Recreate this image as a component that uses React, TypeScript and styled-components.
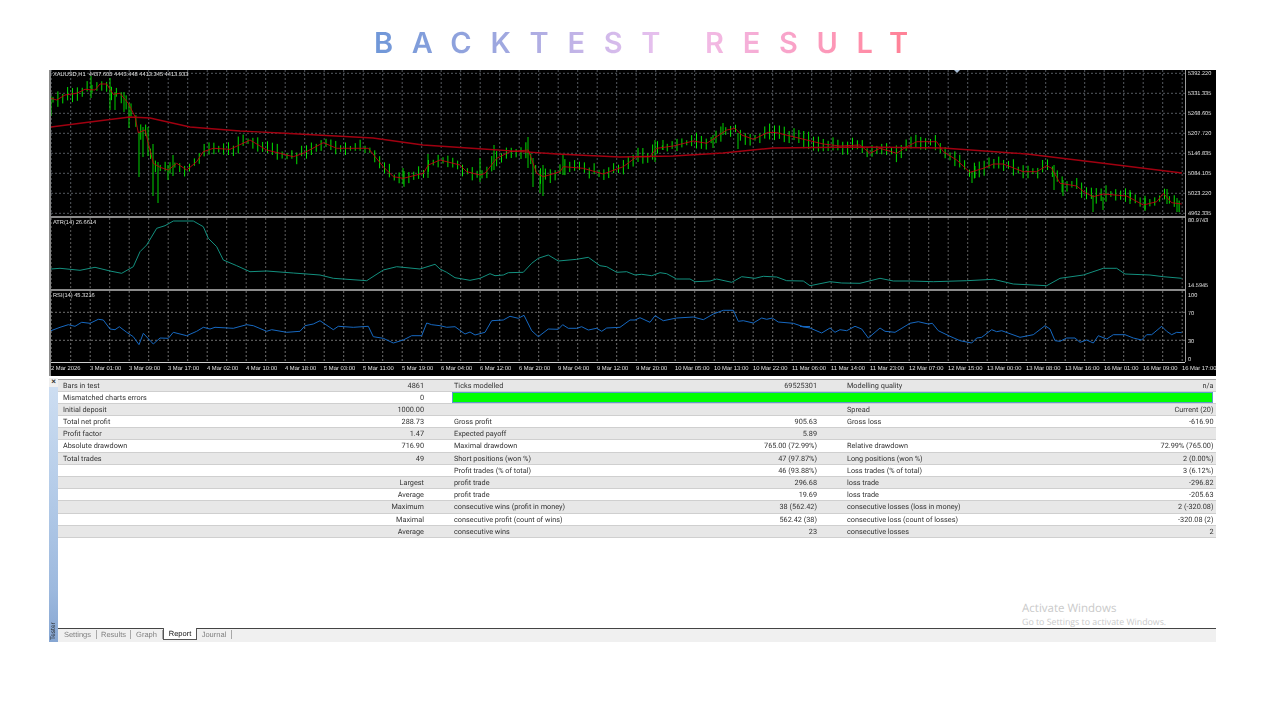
import React from 'react';
import styled, { createGlobalStyle } from 'styled-components';

const GlobalStyle = createGlobalStyle`
    html, body {
        margin: 0;
        padding: 0;
        background: #fff;
        width: 1280px;
        height: 720px;
        overflow: hidden;
        text-rendering: geometricPrecision;
    }
`;

type Pt = [number, number];

// points were read off zoomed crops (3x), so convert them back to page pixels
const crop = (ox: number, oy: number, flat: number[]): Pt[] => {
    const out: Pt[] = [];
    for (let i = 0; i < flat.length; i += 2) {
        out.push([ox + flat[i] / 3, oy + flat[i + 1] / 3]);
    }
    return out;
};

const fastMa: Pt[] = [
    ...crop(40, 60, [33, 115, 50, 120, 75, 105, 110, 100, 135, 88, 165, 90, 180, 72, 200, 72, 220, 103, 240, 100, 265, 130, 285, 170, 295, 218, 315, 210, 340, 310, 360, 322, 385, 330, 410, 310, 440, 330, 470, 305, 490, 275, 520, 265, 570, 268, 630, 240, 680, 270, 760, 290, 790, 280, 850, 248, 890, 265, 985, 265, 1030, 320, 1060, 350, 1090, 355, 1150, 340, 1165, 315, 1200, 300]),
    ...crop(440, 60, [60, 315, 80, 335, 120, 345, 135, 340, 170, 295, 210, 275, 265, 270, 290, 340, 310, 350, 360, 335, 370, 320, 430, 325, 490, 342, 550, 320, 590, 290, 630, 290, 650, 265, 700, 258, 760, 243, 800, 250, 860, 210, 885, 205, 905, 225, 940, 238, 985, 217, 1010, 218, 1100, 240, 1150, 252, 1200, 258]),
    ...crop(860, 60, [0, 255, 30, 280, 60, 265, 110, 280, 140, 260, 170, 245, 230, 245, 250, 275, 290, 300, 330, 337, 370, 325, 400, 312, 430, 312, 490, 335, 530, 335, 560, 317, 575, 325, 600, 370, 650, 378, 675, 398, 700, 410, 730, 402, 800, 408, 850, 435, 890, 425, 910, 400, 935, 428, 965, 432]),
];

const slowMa: Pt[] = [
    [51, 127], [90, 122], [130, 117], [150, 118], [190, 127], [240, 131], [280, 133], [373, 138], [423, 145], [483, 149],
    [557, 154], [620, 157], [673, 156], [723, 153], [773, 148], [860, 147], [943, 148], [1027, 154], [1093, 162], [1182, 173],
];

const atr: Pt[] = [
    ...crop(40, 215, [33, 162, 60, 160, 120, 166, 165, 157, 210, 168, 245, 175, 280, 155, 300, 110, 320, 90, 350, 40, 375, 32, 400, 18, 460, 18, 490, 35, 505, 70, 530, 95, 550, 135, 590, 152, 630, 170, 680, 168, 760, 174, 840, 180, 880, 190, 980, 197, 1030, 165, 1070, 155, 1140, 162, 1185, 148]),
    ...crop(440, 215, [0, 162, 20, 172, 45, 188, 90, 196, 120, 190, 150, 176, 165, 182, 190, 180, 205, 173, 250, 172, 275, 145, 295, 130, 325, 120, 355, 138, 410, 133, 445, 127, 480, 152, 500, 155, 530, 172, 560, 170, 585, 180, 605, 178, 635, 182, 660, 173, 680, 176, 710, 192, 750, 192, 765, 200, 810, 198, 830, 192, 875, 202, 905, 185, 945, 190, 970, 184, 1010, 186, 1040, 197, 1090, 198]),
    ...crop(800, 215, [30, 212, 90, 200, 125, 204, 180, 205, 240, 190, 280, 198, 330, 198, 400, 200, 500, 197, 580, 193, 640, 207, 740, 212, 780, 190, 850, 180, 910, 160, 950, 160, 975, 177, 1050, 180, 1090, 185, 1145, 190]),
];

const rsi: Pt[] = [
    ...crop(40, 215, [33, 350, 60, 340, 85, 332, 105, 337, 125, 325, 150, 328, 175, 316, 190, 318, 210, 345, 225, 347, 238, 338, 260, 355, 280, 368, 297, 392, 310, 358, 340, 390, 360, 372, 385, 373, 400, 355, 440, 365, 470, 352, 490, 340, 510, 345, 525, 340, 580, 343, 620, 332, 640, 335, 680, 352, 695, 347, 740, 355, 780, 352, 795, 335, 820, 330, 840, 320, 880, 347, 895, 337, 940, 340, 985, 337, 1000, 368, 1030, 373, 1060, 387, 1090, 378, 1115, 365, 1145, 365, 1160, 327, 1175, 332]),
    ...crop(440, 215, [0, 335, 20, 340, 45, 338, 75, 360, 90, 354, 105, 363, 135, 355, 155, 320, 190, 318, 210, 307, 235, 313, 252, 304, 275, 350, 295, 368, 325, 345, 355, 346, 368, 332, 385, 343, 410, 343, 425, 338, 445, 348, 470, 343, 485, 352, 500, 342, 540, 340, 570, 318, 585, 318, 600, 311, 630, 325, 645, 305, 670, 320, 710, 312, 760, 309, 790, 317, 820, 300, 850, 289, 880, 289, 895, 322, 910, 320, 940, 327, 965, 312, 980, 316, 997, 312, 1015, 324, 1060, 328, 1090, 338, 1110, 338]),
    ...crop(800, 215, [0, 337, 30, 342, 65, 357, 90, 342, 105, 355, 120, 347, 140, 350, 165, 337, 185, 345, 205, 372, 240, 342, 255, 352, 285, 355, 330, 328, 355, 323, 385, 330, 397, 328, 415, 350, 450, 367, 480, 380, 515, 387, 530, 372, 545, 370, 575, 347, 590, 353, 605, 350, 660, 370, 700, 362, 735, 335, 750, 345, 765, 380, 780, 382, 800, 372, 825, 372, 840, 385, 860, 378, 880, 387, 895, 365, 920, 375, 940, 362, 975, 362, 1000, 372, 1025, 378, 1040, 362, 1055, 362, 1085, 337, 1100, 352, 1115, 362, 1130, 355, 1145, 356]),
];

// the long wicks that stand out in the picture: x, top, bottom
const longWicks: [number, number, number][] = [
    [51, 96, 116], [91, 76, 98], [110, 78, 110], [115, 92, 110], [124, 92, 112], [129, 103, 128], [139, 132, 177], [143, 127, 157], [148, 127, 156], [153, 144, 196], [158, 162, 203], [168, 165, 180], [173, 155, 176],
    [403, 168, 184], [428, 154, 178], [528, 137, 168], [533, 158, 187], [540, 170, 193], [543, 165, 196], [494, 145, 170], [480, 158, 182], [563, 155, 175], [655, 140, 162], [663, 140, 150],
    [713, 135, 148], [723, 123, 135], [738, 133, 149], [975, 166, 178], [972, 172, 183], [1054, 165, 190], [1063, 180, 196],
    [1093, 195, 212], [1103, 197, 210], [1145, 198, 211], [1130, 190, 204], [1167, 189, 204], [1177, 198, 212],
];

const valueAt = (line: Pt[], x: number) => {
    for (let i = 1; i < line.length; i++) {
        if (x <= line[i][0]) {
            const [x0, y0] = line[i - 1];
            const [x1, y1] = line[i];
            return y0 + ((y1 - y0) * (x - x0)) / (x1 - x0 || 1);
        }
    }
    return line[line.length - 1][1];
};

const toPath = (line: Pt[]) => line.map(([x, y], i) => `${i ? 'L' : 'M'}${x.toFixed(1)} ${y.toFixed(1)}`).join(' ');

let seed = 17;
const rnd = () => {
    seed = (seed * 16807) % 2147483647;
    return seed / 2147483647;
};

const bars: [number, number, number][] = [];
for (let x = 53; x < 1183; x += 4.875) {
    const y = valueAt(fastMa, x);
    bars.push([x, y - 2 - rnd() * 7, y + 2 + rnd() * 7]);
}

const gridX: number[] = [];
for (let k = 0; k < 59; k++) gridX.push(51.2 + 19.5 * k);

const priceY = [73.3, 93.3, 113.3, 133.3, 153.3, 173.3, 193.3, 213.3];

const timeLabels = ['2 Mar 2026', '3 Mar 01:00', '3 Mar 09:00', '3 Mar 17:00', '4 Mar 02:00', '4 Mar 10:00', '4 Mar 18:00', '5 Mar 03:00', '5 Mar 11:00', '5 Mar 19:00', '6 Mar 04:00', '6 Mar 12:00', '6 Mar 20:00', '9 Mar 04:00', '9 Mar 12:00', '9 Mar 20:00', '10 Mar 05:00', '10 Mar 13:00', '10 Mar 22:00', '11 Mar 06:00', '11 Mar 14:00', '11 Mar 23:00', '12 Mar 07:00', '12 Mar 15:00', '13 Mar 00:00', '13 Mar 08:00', '13 Mar 16:00', '16 Mar 01:00', '16 Mar 09:00', '16 Mar 17:00'];

const priceLabels = ['5392.220', '5331.335', '5268.605', '5207.720', '5146.835', '5084.105', '5023.220', '4962.335'];

const rows: string[][] = [
    ['Bars in test', '4861', 'Ticks modelled', '69525301', 'Modelling quality', 'n/a'],
    ['Mismatched charts errors', '0', '', '', '', ''],
    ['Initial deposit', '1000.00', '', '', 'Spread', 'Current (20)'],
    ['Total net profit', '288.73', 'Gross profit', '905.63', 'Gross loss', '-616.90'],
    ['Profit factor', '1.47', 'Expected payoff', '5.89', '', ''],
    ['Absolute drawdown', '716.90', 'Maximal drawdown', '765.00 (72.99%)', 'Relative drawdown', '72.99% (765.00)'],
    ['Total trades', '49', 'Short positions (won %)', '47 (97.87%)', 'Long positions (won %)', '2 (0.00%)'],
    ['', '', 'Profit trades (% of total)', '46 (93.88%)', 'Loss trades (% of total)', '3 (6.12%)'],
    ['', 'Largest', 'profit trade', '296.68', 'loss trade', '-296.82'],
    ['', 'Average', 'profit trade', '19.69', 'loss trade', '-205.63'],
    ['', 'Maximum', 'consecutive wins (profit in money)', '38 (562.42)', 'consecutive losses (loss in money)', '2 (-320.08)'],
    ['', 'Maximal', 'consecutive profit (count of wins)', '562.42 (38)', 'consecutive loss (count of losses)', '-320.08 (2)'],
    ['', 'Average', 'consecutive wins', '23', 'consecutive losses', '2'],
];

const Page = styled.div`
    width: 1280px;
    height: 720px;
    background: #fff;
    display: flex;
    flex-direction: column;
    align-items: flex-start;
    position: relative;
    font-family: "Liberation Sans", Arial, sans-serif;
`;

const TitleBar = styled.div`
    width: 100%;
    height: 70px;
    display: flex;
    align-items: center;
    justify-content: center;
    padding-left: 20.7px;
    padding-top: 16px;
    box-sizing: border-box;
`;

const Title = styled.h1`
    margin: 0;
    font-family: Inter, "Noto Sans", sans-serif;
    font-size: 29px;
    line-height: 32px;
    font-weight: 600;
    letter-spacing: 18.7px;
    white-space: pre;
    background: linear-gradient(90deg, #6f97d8 0%, #a3a9e0 25%, #d9bcec 45%, #efc2ee 55%, #f7a8d0 72%, #ff8fab 88%, #ff7a8c 100%);
    -webkit-background-clip: text;
    background-clip: text;
    color: transparent;
`;

const Chart = styled.div`
    margin-left: 49px;
    width: 1167px;
    height: 306px;
    display: flex;
    flex-direction: column;
    background: #000;
    border-left: 2px solid #8c8c8c;
    box-sizing: border-box;
    color: #e0e0e0;
    font-size: 5.6px;
    filter: blur(0.3px);
`;

const Pane = styled.div<{ $height: number }>`
    display: flex;
    height: ${p => p.$height}px;
    flex: none;
`;

const Plot = styled.div<{ $sep?: boolean }>`
    position: relative;
    width: 1134px;
    height: 100%;
    box-sizing: border-box;
    border-bottom: ${p => (p.$sep ? '2.5px solid #8a8a8a' : 'none')};
    svg {
        display: block;
    }
`;

const Legend = styled.div`
    position: absolute;
    left: 2px;
    top: 1px;
    font-size: 5.7px;
    line-height: 8px;
    color: #e0e0e0;
    white-space: pre;
`;

const Axis = styled.div`
    flex: 1;
    display: flex;
    flex-direction: column;
    border-left: 1px solid #9a9a9a;
    padding-left: 2px;
    box-sizing: border-box;
`;

const PriceTick = styled.div`
    height: 20.05px;
    line-height: 8px;
    flex: none;
    white-space: nowrap;
`;

const LevelTick = styled.div<{ $gap: number }>`
    margin-top: ${p => p.$gap}px;
    line-height: 8px;
`;

const AtrTicks = styled.div`
    height: 72.6px;
    display: flex;
    flex-direction: column;
    justify-content: space-between;
    margin-top: -1px;
    line-height: 8px;
`;

const TimeAxis = styled.div`
    height: 13px;
    display: flex;
    border-top: 1px solid #d0d0d0;
    margin-right: 31px;
    align-items: center;
    box-sizing: border-box;
`;

const TimeTick = styled.div`
    width: 39px;
    flex: none;
    white-space: nowrap;
    line-height: 11px;
    font-size: 5.85px;
    color: #e4e4e4;
`;

const Tester = styled.div`
    margin-left: 49px;
    width: 1167px;
    height: 266px;
    display: flex;
    background: #fff;
    position: relative;
    box-sizing: border-box;
`;

const SideBar = styled.div`
    width: 9px;
    flex: none;
    position: relative;
    margin-top: 2px;
    background: linear-gradient(180deg, #cfdff2 0%, #b6cde9 40%, #9db9de 80%, #86a6d2 100%);
`;

const CloseBox = styled.div`
    position: absolute;
    left: 0;
    top: 0;
    width: 9px;
    height: 9px;
    background: #efefef;
    color: #333;
    font-size: 8px;
    font-weight: 700;
    line-height: 7px;
    text-align: center;
`;

const TesterLabel = styled.div`
    position: absolute;
    left: 0;
    bottom: 2px;
    width: 9px;
    height: 16px;
    writing-mode: vertical-rl;
    transform: rotate(180deg);
    font-size: 6.5px;
    line-height: 9px;
    text-align: left;
    color: #222;
`;

const Report = styled.div`
    flex: 1;
    display: flex;
    flex-direction: column;
    min-width: 0;
    filter: blur(0.25px);
`;

const Table = styled.div`
    flex: 1;
    padding-top: 3.5px;
`;

const Row = styled.div<{ $shade: boolean }>`
    height: 12.2px;
    box-sizing: border-box;
    display: grid;
    grid-template-columns: 393px 393px 373px;
    background: ${p => (p.$shade ? '#e7e7e7' : '#fff')};
    border-bottom: 1px solid #cfcfcf;
    font-family: Roboto, "Liberation Sans", sans-serif;
    font-size: 7.3px;
    line-height: 12px;
    color: #333;
    position: relative;
    &:first-child {
        box-shadow: 0 -1px 0 #9c9c9c;
    }
`;

const Cell = styled.div<{ $last?: boolean; $first?: boolean }>`
    display: flex;
    justify-content: space-between;
    padding: 0 ${p => (p.$last ? '3.5px' : '27px')} 0 ${p => (p.$first ? '5px' : '3px')};
    white-space: nowrap;
`;

const ProgressBar = styled.div`
    position: absolute;
    left: 394px;
    right: 3px;
    top: 0;
    bottom: 0;
    background: #00ff00;
    border: 1px solid #5d9bc9;
    box-sizing: border-box;
`;

const TabStrip = styled.div`
    height: 14px;
    flex: none;
    display: flex;
    align-items: flex-start;
    padding-left: 1px;
    background: #f0f0f0;
    border-top: 1px solid #444;
    box-sizing: border-box;
    font-size: 7.5px;
    color: #777;
`;

const Tab = styled.div<{ $active?: boolean; $width: number }>`
    width: ${p => p.$width}px;
    height: ${p => (p.$active ? '12px' : '9px')};
    box-sizing: border-box;
    line-height: ${p => (p.$active ? '11px' : '9px')};
    text-align: center;
    color: ${p => (p.$active ? '#111' : '#808080')};
    background: ${p => (p.$active ? '#fff' : 'transparent')};
    margin-top: ${p => (p.$active ? '-1px' : '1px')};
    border-right: ${p => (p.$active ? '1px solid #555' : '1px solid #a8a8a8')};
    border-left: ${p => (p.$active ? '1px solid #555' : 'none')};
    border-bottom: ${p => (p.$active ? '1px solid #555' : 'none')};
`;

const Watermark = styled.div`
    position: absolute;
    left: 973px;
    top: 225px;
    color: #cacaca;
    font-family: "Open Sans", sans-serif;
    font-size: 11.5px;
    line-height: 15px;
    pointer-events: none;
    small {
        display: block;
        font-size: 8.8px;
        line-height: 12px;
    }
`;

function Grid({ y0, h, horiz, color }: { y0: number; h: number; horiz: number[]; color: string }) {
    return (
        <>
            {gridX.map(x => (
                <line key={x} x1={x} x2={x} y1={y0} y2={y0 + h} stroke={color} strokeWidth="0.8" strokeDasharray="2 2" />
            ))}
            {horiz.map(y => (
                <line key={y} x1={51} x2={1185} y1={y} y2={y} stroke={color} strokeWidth="0.8" strokeDasharray="2 2" />
            ))}
        </>
    );
}

function PriceChart() {
    return (
        <svg width="1134" height="145" viewBox="51 70 1134 145">
            <Grid y0={70} h={145} horiz={priceY} color="#697077" />
            {bars.map(([x, a, b]) => (
                <line key={x} x1={x} x2={x} y1={a} y2={b} stroke="#00e000" strokeWidth="1" />
            ))}
            {longWicks.map(([x, a, b]) => (
                <line key={x} x1={x} x2={x} y1={a} y2={b} stroke="#00d000" strokeWidth="1" />
            ))}
            <path d={toPath(slowMa)} fill="none" stroke="#a00010" strokeWidth="1.4" />
            <path d={toPath(fastMa)} fill="none" stroke="#c00010" strokeWidth="0.9" />
            <polygon points="954,70 960,70 957,73" fill="#a9bdd6" />
        </svg>
    );
}

function AtrChart() {
    return (
        <svg width="1134" height="70" viewBox="51 218 1134 70">
            <Grid y0={218} h={70} horiz={[]} color="#767676" />
            <path d={toPath(atr)} fill="none" stroke="#13907f" strokeWidth="1" />
        </svg>
    );
}

function RsiChart() {
    return (
        <svg width="1134" height="71" viewBox="51 292 1134 71">
            <Grid y0={292} h={71} horiz={[313.3, 341.3]} color="#8a8a8a" />
            <path d={toPath(rsi)} fill="none" stroke="#1668c0" strokeWidth="1" />
        </svg>
    );
}

export default function App() {
    return (
        <Page>
            <GlobalStyle />
            <TitleBar>
                <Title>BACKTEST RESULT</Title>
            </TitleBar>
            <Chart>
                <Pane $height={148}>
                    <Plot $sep>
                        <PriceChart />
                        <Legend>{'XAUUSD,H1  4437.605 4443.448 4413.345 4413.933'}</Legend>
                    </Plot>
                    <Axis>
                        {priceLabels.map(l => <PriceTick key={l}>{l}</PriceTick>)}
                    </Axis>
                </Pane>
                <Pane $height={72.5}>
                    <Plot $sep>
                        <AtrChart />
                        <Legend>ATR(14) 26.6614</Legend>
                    </Plot>
                    <Axis>
                        <AtrTicks>
                            <div>80.9743</div>
                            <div>14.5945</div>
                        </AtrTicks>
                    </Axis>
                </Pane>
                <Pane $height={71.5}>
                    <Plot>
                        <RsiChart />
                        <Legend>RSI(14) 45.3216</Legend>
                    </Plot>
                    <Axis>
                        <LevelTick $gap={1}>100</LevelTick>
                        <LevelTick $gap={10}>70</LevelTick>
                        <LevelTick $gap={20}>30</LevelTick>
                        <LevelTick $gap={10}>0</LevelTick>
                    </Axis>
                </Pane>
                <TimeAxis>
                    {timeLabels.map(t => <TimeTick key={t}>{t}</TimeTick>)}
                </TimeAxis>
            </Chart>
            <Tester>
                <SideBar>
                    <CloseBox>×</CloseBox>
                    <TesterLabel>Tester</TesterLabel>
                </SideBar>
                <Report>
                    <Table>
                        {rows.map((r, i) => (
                            <Row key={i} $shade={i % 2 === 0}>
                                <Cell $first><span>{r[0]}</span><span>{r[1]}</span></Cell>
                                <Cell><span>{r[2]}</span><span>{r[3]}</span></Cell>
                                <Cell $last><span>{r[4]}</span><span>{r[5]}</span></Cell>
                                {i === 1 && <ProgressBar />}
                            </Row>
                        ))}
                    </Table>
                    <TabStrip>
                        <Tab $width={38}>Settings</Tab>
                        <Tab $width={34}>Results</Tab>
                        <Tab $width={32}>Graph</Tab>
                        <Tab $width={34} $active>Report</Tab>
                        <Tab $width={35}>Journal</Tab>
                    </TabStrip>
                </Report>
                <Watermark>
                    Activate Windows
                    <small>Go to Settings to activate Windows.</small>
                </Watermark>
            </Tester>
        </Page>
    );
}
